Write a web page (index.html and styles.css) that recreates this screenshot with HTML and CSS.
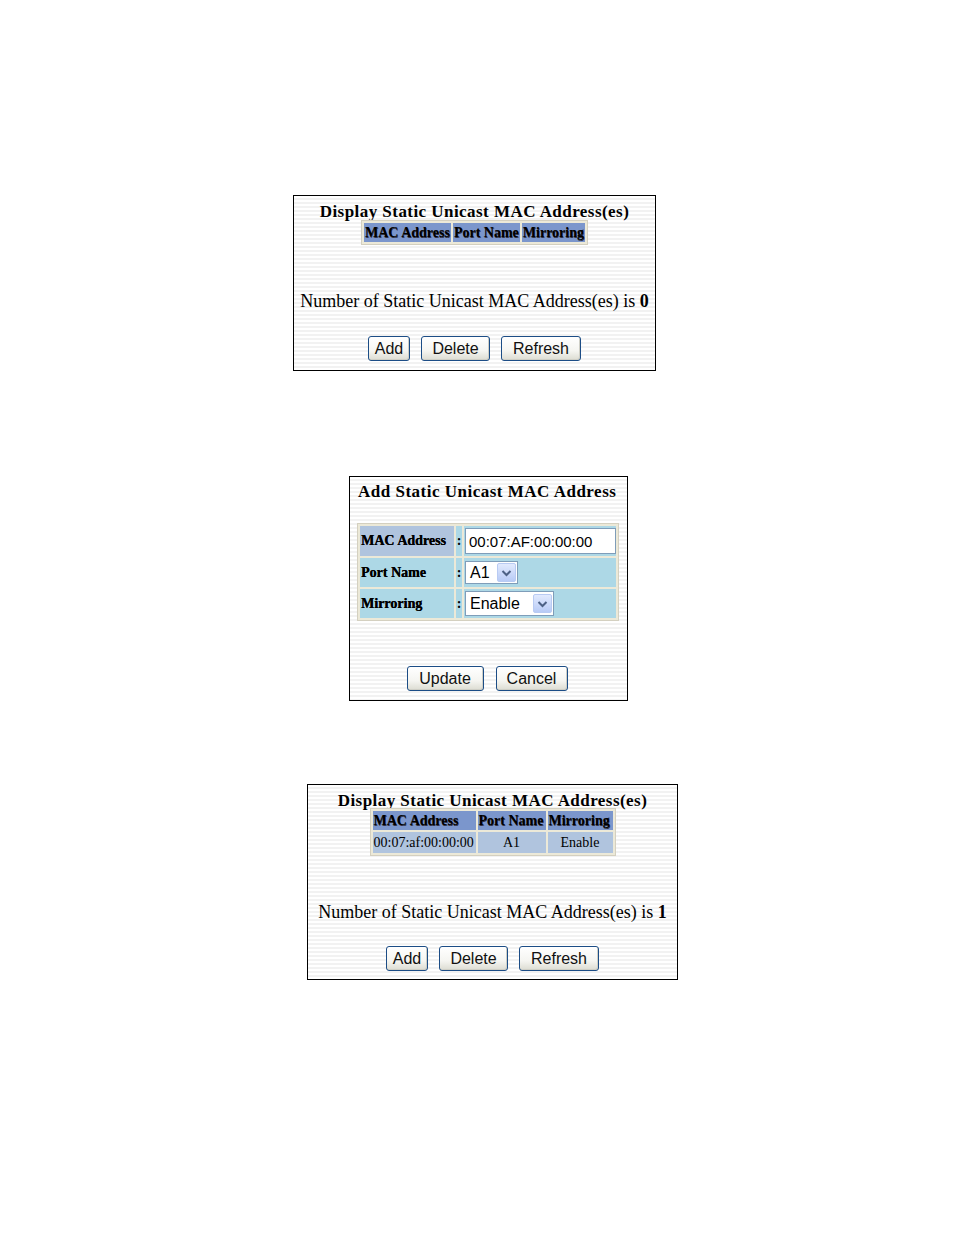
FILE: index.html
```html
<!DOCTYPE html>
<html>
<head>
<meta charset="utf-8">
<link rel="stylesheet" href="styles.css">
</head>
<body>
<div class="page">
  <div class="panel p1">
    <div class="title center">Display Static Unicast MAC Address(es)</div>
    <table class="list">
      <tr><th>MAC Address</th><th>Port Name</th><th>Mirroring</th></tr>
    </table>
    <div class="count">Number of Static Unicast MAC Address(es) is <b>0</b></div>
    <div class="buttons">
      <span class="btn w-add">Add</span>
      <span class="btn w-del">Delete</span>
      <span class="btn w-ref">Refresh</span>
    </div>
  </div>

  <div class="panel p2">
    <div class="title">Add Static Unicast MAC Address</div>
    <table class="form">
      <tr class="r-mac">
        <td class="lab mac">MAC Address</td><td class="colon">:</td>
        <td class="val"><span class="input">00:07:AF:00:00:00</span></td>
      </tr>
      <tr class="r-port">
        <td class="lab">Port Name</td><td class="colon">:</td>
        <td class="val"><span class="select s-a1"><span class="sv">A1</span><span class="arrow"><svg width="11" height="8" viewBox="0 0 11 8"><path d="M1.5 2 L5.5 6 L9.5 2" fill="none" stroke="#4d6185" stroke-width="2"/></svg></span></span></td>
      </tr>
      <tr class="r-mir">
        <td class="lab">Mirroring</td><td class="colon">:</td>
        <td class="val"><span class="select s-en"><span class="sv">Enable</span><span class="arrow"><svg width="11" height="8" viewBox="0 0 11 8"><path d="M1.5 2 L5.5 6 L9.5 2" fill="none" stroke="#4d6185" stroke-width="2"/></svg></span></span></td>
      </tr>
    </table>
    <div class="buttons b2">
      <span class="btn w-upd">Update</span>
      <span class="btn w-can">Cancel</span>
    </div>
  </div>

  <div class="panel p3">
    <div class="title center">Display Static Unicast MAC Address(es)</div>
    <table class="list l3">
      <tr><th class="c1">MAC Address</th><th class="c2">Port Name</th><th class="c3">Mirroring</th></tr>
      <tr><td class="c1 left">00:07:af:00:00:00</td><td>A1</td><td>Enable</td></tr>
    </table>
    <div class="count c3gap">Number of Static Unicast MAC Address(es) is <b>1</b></div>
    <div class="buttons">
      <span class="btn w-add">Add</span>
      <span class="btn w-del">Delete</span>
      <span class="btn w-ref">Refresh</span>
    </div>
  </div>
</div>
</body>
</html>
```

FILE: styles.css
```css
html, body { margin: 0; padding: 0; background: #fff; }
body { font-family: "Liberation Serif", "Times New Roman", serif; color: #000; }
.page { display: flex; flex-direction: column; align-items: flex-start; width: 954px; height: 1235px; }

.panel {
  box-sizing: border-box;
  border: 1px solid #000;
  background: repeating-linear-gradient(to bottom, #fff 0px, #fff 2px, #f2f2f2 2px, #f2f2f2 4px);
  display: flex; flex-direction: column;
}
.p1 { margin: 195px 0 0 293px; width: 363px; height: 176px; align-items: center; }
.p2 { margin: 105px 0 0 349px; width: 279px; height: 225px; }
.p3 { margin: 83px 0 0 307px; width: 371px; height: 196px; align-items: center; }

.title { font-weight: bold; font-size: 17px; line-height: 20px; margin-top: 6px; letter-spacing: 0.45px; }
.p2 .title { margin: 5px 0 0 8px; letter-spacing: 0.5px; }

table { border-collapse: separate; }
.list { border-spacing: 2px; background: #ece9d8; border: 1px solid #d4d0c0; margin-top: -2px; }
.l3 { margin-top: -3px; }
.list th {
  background: #7b96cc; font-weight: bold; font-size: 14px; line-height: 17px;
  padding: 1px 1px 1px 1px; text-align: left; white-space: nowrap;
  text-shadow: 0.5px 0.5px 0 #334;
}
.list td { background: #b0c4de; font-size: 14px; line-height: 17px; padding: 2px 1px; text-align: center; white-space: nowrap; }
.list td.left { text-align: left; }
.l3 th.c1 { width: 101px; }
.l3 th.c2 { width: 66px; }
.l3 th.c3 { width: 63px; }

.count { font-size: 18px; line-height: 20px; margin-top: 46px; white-space: nowrap; }
.c3gap { margin-top: 46px; }
.count b { font-weight: bold; }

.buttons { display: flex; gap: 11px; margin-top: 25px; justify-content: center; }
.p3 .buttons { margin-top: 24px; }
.b2 { margin-top: 45px; align-self: center; gap: 12px; margin-right: 3px; }
.btn {
  box-sizing: border-box; height: 25px; display: flex; align-items: center; justify-content: center;
  font-family: "Liberation Sans", Arial, sans-serif; font-size: 16px; color: #111;
  border: 1px solid #1c4d86; border-radius: 3px;
  background: linear-gradient(to bottom, #ffffff 0%, #f5f5f1 60%, #dcdcd2 100%);
  box-shadow: inset -1px -1px 0 #cfcfc6;
}
.w-add { width: 42px; }
.w-del { width: 69px; }
.w-ref { width: 80px; }
.w-upd { width: 77px; }
.w-can { width: 72px; }

.form { margin: 21px 0 0 7px; border-spacing: 2px; background: #ece9d8; border: 1px solid #d4d0c0; width: 262px; }
.form td { background: #add8e6; padding: 0; height: 29px; }
.form .r-mac td { height: 30px; }
.form td.mac { background: #b0c4de; }
.lab { font-weight: bold; font-size: 14px; padding-left: 1px !important; width: 93px; white-space: nowrap; text-shadow: 0.3px 0 0 #000; }
.colon { width: 6px; font-weight: bold; font-size: 14px; text-align: center; }
.val { padding-left: 1px !important; }
.input {
  box-sizing: border-box; display: flex; align-items: center; width: 151px; height: 26px;
  border: 1px solid #7f9db9; background: #fff; padding-left: 3px;
  font-family: "Liberation Sans", Arial, sans-serif; font-size: 15px;
}
.select {
  box-sizing: border-box; display: flex; align-items: center; justify-content: space-between; height: 23px;
  border: 1px solid #7f9db9; background: #fff; padding: 0 1px 0 4px;
  font-family: "Liberation Sans", Arial, sans-serif; font-size: 16px;
}
.s-a1 { width: 53px; }
.s-en { width: 89px; height: 25px; }
.arrow {
  box-sizing: border-box; width: 19px; height: 19px; border: 1px solid #b9cbf3; border-radius: 2px;
  background: linear-gradient(to bottom, #e2eafe, #b8cbf6);
  display: flex; align-items: center; justify-content: center;
}
```
